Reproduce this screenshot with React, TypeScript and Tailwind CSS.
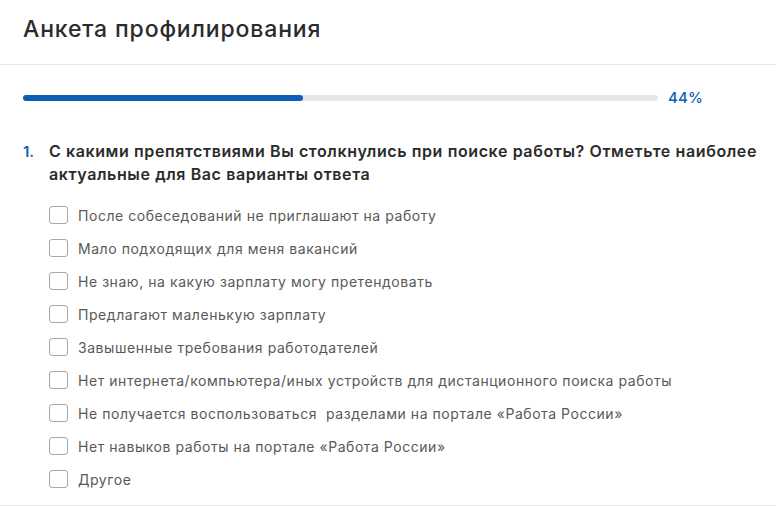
const options = [
  "После собеседований не приглашают на работу",
  "Мало подходящих для меня вакансий",
  "Не знаю, на какую зарплату могу претендовать",
  "Предлагают маленькую зарплату",
  "Завышенные требования работодателей",
  "Нет интернета/компьютера/иных устройств для дистанционного поиска работы",
  "Не получается воспользоваться  разделами на портале «Работа России»",
  "Нет навыков работы на портале «Работа России»",
  "Другое",
];

export default function App() {
  return (
    <div className="w-[776px] h-[506px] overflow-hidden bg-white font-['Inter',sans-serif]">
      {/* Header */}
      <div className="h-[65px] border-b border-[#e6e6e6] px-[23px] pt-[15px]">
        <h1 className="text-[23px] leading-[28px] font-medium tracking-[0.85px] text-[#2b2b2b]">
          Анкета профилирования
        </h1>
      </div>

      <div className="pl-[23px] pr-[8px] border-b border-[#e6e6e6] pb-[17px]">
        {/* Progress */}
        <div className="flex items-center gap-[10px] pt-[23px]">
          <div className="w-[635px] h-[6px] rounded-full bg-[#e6e6e6]">
            <div className="h-full w-[280px] rounded-full bg-[#0d5eb5]" />
          </div>
          <span className="text-[15px] font-medium text-[#0d5eb5] leading-[20px] tracking-[0.2px]">44%</span>
        </div>

        {/* Question */}
        <div className="flex mt-[32px]">
          <span className="w-[26px] shrink-0 text-[15px] leading-[23px] font-semibold text-[#0d5eb5]">1.</span>
          <div className="flex-1">
            <p className="text-[16px] leading-[23px] font-semibold tracking-[0.6px] text-[#2b2b2b]">
              С какими препятствиями Вы столкнулись при поиске работы? Отметьте наиболее актуальные для Вас варианты ответа
            </p>
            <div className="mt-[20px] flex flex-col gap-[15px]">
              {options.map((o) => (
                <label key={o} className="flex items-center gap-[10px] h-[18px]">
                  <span className="w-[19px] h-[18px] shrink-0 rounded-[3px] border border-[#a8a8a8] bg-white" />
                  <span className="text-[14px] tracking-[0.55px] text-[#595959] whitespace-pre">{o}</span>
                </label>
              ))}
            </div>
          </div>
        </div>
      </div>
    </div>
  );
}
